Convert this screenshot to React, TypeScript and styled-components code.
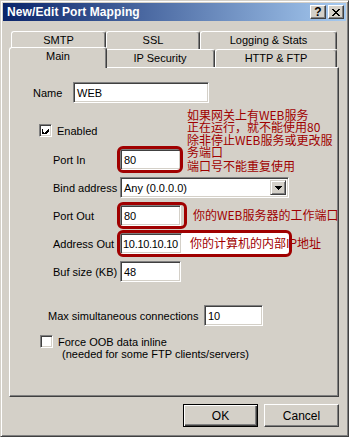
import React from "react";
import styled, { createGlobalStyle } from "styled-components";

const Global = createGlobalStyle`
  html, body { margin: 0; padding: 0; background: #d4d0c8; }
  body {
    font-family: "Liberation Sans", Arial, sans-serif;
    font-size: 11px;
    color: #000;
  }
  #root { width: 349px; height: 437px; }
  * { box-sizing: border-box; }
`;

const RED = "#a00000";

const Window = styled.div`
  width: 349px;
  height: 437px;
  background: #d4d0c8;
  border: 1px solid;
  border-color: #d4d0c8 #404040 #404040 #d4d0c8;
  box-shadow: inset 1px 1px 0 #fff, inset -1px -1px 0 #808080;
  padding: 2px;
  display: flex;
  flex-direction: column;
`;

const TitleBar = styled.div`
  height: 18px;
  flex: none;
  display: flex;
  align-items: center;
  padding: 0 2px;
  background: linear-gradient(to right, #0a246a, #a6caf0);
  color: #fff;
`;

const TitleText = styled.div`
  flex: 1;
  font-weight: bold;
  font-size: 12px;
  padding-left: 2px;
  letter-spacing: 0.1px;
  line-height: 18px;
`;

const CaptionButtons = styled.div`
  display: flex;
  gap: 2px;
`;

const CaptionButton = styled.div`
  width: 16px;
  height: 14px;
  background: #d4d0c8;
  border: 1px solid;
  border-color: #fff #404040 #404040 #fff;
  box-shadow: inset -1px -1px 0 #808080;
  display: flex;
  align-items: center;
  justify-content: center;
  color: #000;
  font-weight: bold;
  font-size: 12px;
  line-height: 12px;
`;

const Body = styled.div`
  flex: 1;
  display: flex;
  flex-direction: column;
  padding: 10px 7px 7px 6px;
`;

const TabRows = styled.div`
  display: flex;
  flex-direction: column;
  padding-left: 2px;
`;

const TabRow = styled.div`
  display: flex;
  height: 18px;
  align-items: flex-end;
`;

const Tab = styled.div<{ $w: number; $active?: boolean }>`
  width: ${(p) => (p.$active ? p.$w + 4 : p.$w)}px;
  height: ${(p) => (p.$active ? 21 : 18)}px;
  margin: ${(p) => (p.$active ? "0 -2px -1px -2px" : "0")};
  position: relative;
  z-index: ${(p) => (p.$active ? 2 : 1)};
  background: #d4d0c8;
  border-top: 1px solid #fff;
  border-left: 1px solid #fff;
  border-right: 1px solid #404040;
  box-shadow: inset -1px 0 0 #808080;
  border-radius: 3px 3px 0 0;
  display: flex;
  justify-content: center;
  padding-top: 2px;
  font-size: 11px;
  line-height: 13px;
  white-space: nowrap;
`;

const Panel = styled.div`
  position: relative;
  height: 330px;
  flex: none;
  background: #d4d0c8;
  border-top: 1px solid #fff;
  border-left: 1px solid #fff;
  border-right: 1px solid #404040;
  border-bottom: 1px solid #404040;
  box-shadow: inset -1px -1px 0 #808080;
  display: flex;
  flex-direction: column;
`;

const Row = styled.div<{ $top: number; $left: number }>`
  display: flex;
  align-items: center;
  margin-top: ${(p) => p.$top}px;
  padding-left: ${(p) => p.$left}px;
`;

const Label = styled.div<{ $w?: number }>`
  width: ${(p) => (p.$w ? `${p.$w}px` : "auto")};
  flex: none;
  white-space: nowrap;
`;

const Edit = styled.div<{ $w: number; $tight?: boolean }>`
  width: ${(p) => p.$w}px;
  height: 21px;
  background: #fff;
  border: 1px solid;
  border-color: #808080 #fff #fff #808080;
  box-shadow: inset 1px 1px 0 #404040, inset -1px -1px 0 #d4d0c8;
  padding: 3px 0 0 ${(p) => (p.$tight ? 2 : 3)}px;
  line-height: 14px;
  font-size: 11px;
  letter-spacing: ${(p) => (p.$tight ? "-0.3px" : "0")};
  white-space: nowrap;
  overflow: hidden;
`;

const Check = styled.div`
  width: 13px;
  height: 13px;
  flex: none;
  background: #fff;
  border: 1px solid;
  border-color: #808080 #fff #fff #808080;
  box-shadow: inset 1px 1px 0 #404040, inset -1px -1px 0 #d4d0c8;
  display: flex;
  align-items: center;
  justify-content: center;
`;

const CheckLabel = styled.div`
  margin-left: 5px;
  white-space: nowrap;
`;

const FieldGrid = styled.div`
  display: grid;
  grid-template-columns: 67px auto;
  grid-auto-rows: 21px;
  row-gap: 7px;
  align-items: center;
  justify-items: start;
  margin-top: 12px;
  padding-left: 43px;
`;

const Combo = styled.div`
  width: 169px;
  height: 21px;
  background: #fff;
  border: 1px solid;
  border-color: #808080 #fff #fff #808080;
  box-shadow: inset 1px 1px 0 #404040, inset -1px -1px 0 #d4d0c8;
  display: flex;
  align-items: stretch;
  padding: 2px;
`;

const ComboText = styled.div`
  flex: 1;
  padding: 1px 0 0 1px;
  line-height: 14px;
  font-size: 11px;
`;

const ComboArrow = styled.div`
  width: 16px;
  flex: none;
  background: #d4d0c8;
  border: 1px solid;
  border-color: #d4d0c8 #404040 #404040 #d4d0c8;
  box-shadow: inset 1px 1px 0 #fff, inset -1px -1px 0 #808080;
  display: flex;
  align-items: center;
  justify-content: center;
`;

const SubLine = styled.div`
  padding-left: 52px;
  white-space: nowrap;
  line-height: 13px;
`;

const ButtonRow = styled.div`
  display: flex;
  justify-content: flex-end;
  gap: 6px;
  margin-top: 7px;
`;

const Button = styled.div<{ $default?: boolean }>`
  width: 75px;
  height: 23px;
  background: #d4d0c8;
  border: 1px solid;
  border-color: ${(p) => (p.$default ? "#000" : "#fff #404040 #404040 #fff")};
  box-shadow: ${(p) =>
    p.$default
      ? "inset 1px 1px 0 #fff, inset -1px -1px 0 #404040, inset -2px -2px 0 #808080"
      : "inset -1px -1px 0 #808080"};
  display: flex;
  align-items: center;
  justify-content: center;
  font-size: 12px;
`;

/* annotations drawn over the dialog */
const RedBox = styled.div<{ $x: number; $y: number; $w: number; $h: number }>`
  position: absolute;
  left: ${(p) => p.$x}px;
  top: ${(p) => p.$y}px;
  width: ${(p) => p.$w}px;
  height: ${(p) => p.$h}px;
  border: 3px solid ${RED};
  border-radius: 6px;
  z-index: 3;
  pointer-events: none;
`;

const Note = styled.div<{ $x: number; $y: number }>`
  position: absolute;
  left: ${(p) => p.$x}px;
  top: ${(p) => p.$y}px;
  color: ${RED};
  font-family: "Noto Sans CJK SC", "Liberation Sans", sans-serif;
  font-size: 12px;
  line-height: 12.4px;
  white-space: nowrap;
  z-index: 2;
`;

const NoteLine = styled.div`
  height: 12.4px;
`;

const WhiteFill = styled.div<{ $x: number; $y: number; $w: number; $h: number }>`
  position: absolute;
  left: ${(p) => p.$x}px;
  top: ${(p) => p.$y}px;
  width: ${(p) => p.$w}px;
  height: ${(p) => p.$h}px;
  background: #fff;
  z-index: 2;
  padding-left: 8px;
  padding-top: 3px;
  color: ${RED};
  font-family: "Noto Sans CJK SC", "Liberation Sans", sans-serif;
  font-size: 12px;
  line-height: 14px;
  white-space: nowrap;
`;

const CheckMark = () => (
  <svg width="7" height="7" viewBox="0 0 7 7" shapeRendering="crispEdges">
    <path d="M0 2h1v3h1v1h1v-1h1v-1h1v-1h1v-1h1v3h-1v1h-1v1h-1v1h-1v1h-1v-1h-1v-1h-1z" fill="#000" />
  </svg>
);

const XGlyph = () => (
  <svg width="8" height="7" viewBox="0 0 8 7" shapeRendering="crispEdges">
    <path d="M0 0h2v1h1v1h2v-1h1v-1h2v1h-1v1h-1v1h-1v1h1v1h1v1h1v1h-2v-1h-1v-1h-2v1h-1v1h-2v-1h1v-1h1v-1h1v-1h-1v-1h-1v-1h-1z" fill="#000" />
  </svg>
);

const DownArrow = () => (
  <svg width="7" height="4" viewBox="0 0 7 4" shapeRendering="crispEdges">
    <path d="M0 0h7v1h-1v1h-1v1h-1v1h-1v-1h-1v-1h-1v-1h-1z" fill="#000" />
  </svg>
);

export default function App() {
  return (
    <>
      <Global />
      <Window>
        <TitleBar>
          <TitleText>New/Edit Port Mapping</TitleText>
          <CaptionButtons>
            <CaptionButton>?</CaptionButton>
            <CaptionButton>
              <XGlyph />
            </CaptionButton>
          </CaptionButtons>
        </TitleBar>
        <Body>
          <TabRows>
            <TabRow>
              <Tab $w={95}>SMTP</Tab>
              <Tab $w={94}>SSL</Tab>
              <Tab $w={137}>Logging &amp; Stats</Tab>
            </TabRow>
            <TabRow>
              <Tab $w={94} $active>
                Main
              </Tab>
              <Tab $w={110}>IP Security</Tab>
              <Tab $w={122}>HTTP &amp; FTP</Tab>
            </TabRow>
          </TabRows>
          <Panel>
            <Row $top={14} $left={23}>
              <Label $w={40}>Name</Label>
              <Edit $w={136}>WEB</Edit>
            </Row>
            <Row $top={21} $left={29}>
              <Check>
                <CheckMark />
              </Check>
              <CheckLabel>Enabled</CheckLabel>
            </Row>
            <FieldGrid>
              <Label>Port In</Label>
              <Edit $w={61}>80</Edit>
              <Label>Bind address</Label>
              <Combo>
                <ComboText>Any (0.0.0.0)</ComboText>
                <ComboArrow>
                  <DownArrow />
                </ComboArrow>
              </Combo>
              <Label>Port Out</Label>
              <Edit $w={61}>80</Edit>
              <Label>Address Out</Label>
              <Edit $w={62} $tight>
                10.10.10.10
              </Edit>
              <Label>Buf size (KB)</Label>
              <Edit $w={61}>48</Edit>
            </FieldGrid>
            <Row $top={23} $left={38}>
              <Label $w={156}>Max simultaneous connections</Label>
              <Edit $w={59}>10</Edit>
            </Row>
            <Row $top={9} $left={30}>
              <Check />
              <CheckLabel>Force OOB data inline</CheckLabel>
            </Row>
            <SubLine>(needed for some FTP clients/servers)</SubLine>

            <Note $x={177} $y={41}>
              <NoteLine>如果网关上有WEB服务</NoteLine>
              <NoteLine>正在运行，就不能使用80</NoteLine>
              <NoteLine>除非停止WEB服务或更改服</NoteLine>
              <NoteLine>务端口</NoteLine>
            </Note>
            <Note $x={177} $y={92}>端口号不能重复使用</Note>
            <Note $x={183} $y={141}>你的WEB服务器的工作端口</Note>
            <WhiteFill $x={172} $y={165} $w={108} $h={21}>
              你的计算机的内部IP地址
            </WhiteFill>
            <RedBox $x={107} $y={78} $w={66} $h={27} />
            <RedBox $x={107} $y={134} $w={70} $h={27} />
            <RedBox $x={107} $y={162} $w={175} $h={27} />
          </Panel>
          <ButtonRow>
            <Button $default>OK</Button>
            <Button>Cancel</Button>
          </ButtonRow>
        </Body>
      </Window>
    </>
  );
}
